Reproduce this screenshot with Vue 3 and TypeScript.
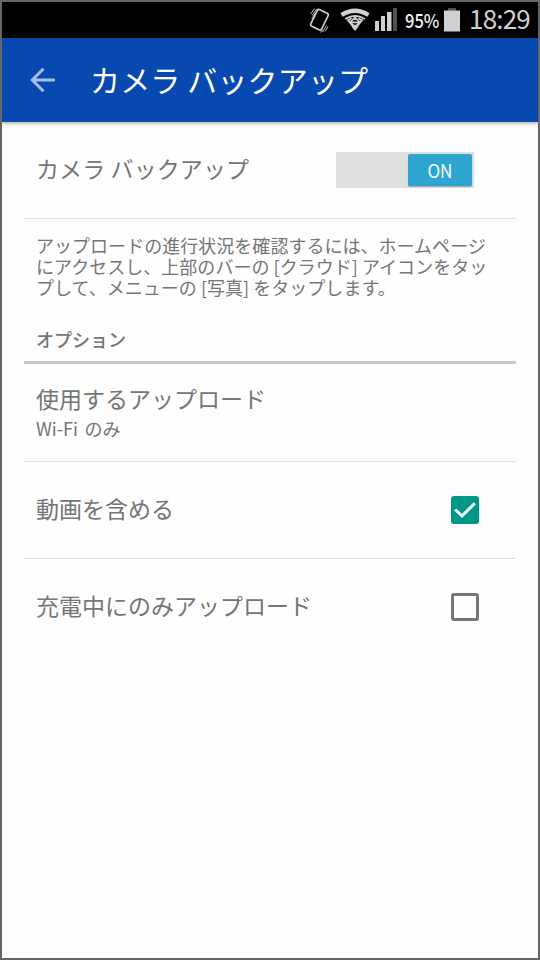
<script setup lang="ts">
import { ref } from 'vue'

const backupEnabled = ref(true)
const options = ref([
  { label: '動画を含める', checked: true },
  { label: '充電中にのみアップロード', checked: false },
])
const description = [
  'アップロードの進行状況を確認するには、ホームページ',
  'にアクセスし、上部のバーの [クラウド] アイコンをタッ',
  'プして、メニューの [写真] をタップします。',
].join('\n')
</script>

<template>
  <div class="screen">
    <header class="status">
      <svg class="vibrate" viewBox="0 0 24 28" width="24" height="28">
        <g fill="none" stroke="#d0d0d0">
          <rect x="6.500" y="4.500" width="12" height="18.500" rx="2" stroke-width="1.600" transform="rotate(26 12.500 13.700)" />
          <path d="M5.300 9.500 10 2.500M4.800 13 8 7.500M3.800 8 7.500 2.500M15.500 26l4-6.500M13.500 26.500l2-3M18 25.500l3-5" stroke-width="0.900" />
        </g>
      </svg>
      <svg class="wifi" viewBox="0 0 30 24" width="30" height="24">
        <g fill="none" stroke="#d0d0d0">
          <path d="M1.500 7Q15-1.500 28.500 7" stroke-width="4.200" />
          <path d="M5.200 11Q15 4.600 24.800 11" stroke-width="1.800" />
          <path d="M7.300 11.500 15 21l7.700-9.500M10 14.500l5-5 5 5-5 4.500zM15 7.500V12M8.500 12.500l3-2.500M21.500 12.500l-3-2.500M11 14.300h8" stroke-width="1.700" />
        </g>
        <path d="M11.500 18.500 15 16.500l3.500 2L15 23z" fill="#d0d0d0" />
      </svg>
      <svg class="signal" viewBox="0 0 22 24" width="22" height="24">
        <path d="M0 13h4v10H0zM6 8h4v15H6zM12 4h4.500v19H12z" fill="#d0d0d0" />
        <path d="M18 0h4v23h-4z" fill="#505050" />
      </svg>
      <span class="percent"><span class="digits">95%</span></span>
      <svg class="battery" viewBox="0 0 16 24" width="16" height="24">
        <path d="M4 0h8v3H4z" fill="#505050" />
        <path d="M0 2.500h16V23.500H0z" fill="#d0d0d0" />
      </svg>
      <span class="clock">18:29</span>
    </header>

    <div class="appbar">
      <svg class="back" viewBox="0 0 26 26" width="26" height="26">
        <path d="M26 13H3.500M14.500 1.800 3.300 13l11.200 11.200" fill="none" stroke="#a7c0ea" stroke-width="3" />
      </svg>
      <h1>カメラ バックアップ</h1>
    </div>

    <main>
      <section class="row master">
        <span class="label">カメラ バックアップ</span>
        <button class="switch" :class="{ on: backupEnabled }" @click="backupEnabled = !backupEnabled">
          <span class="thumb"><span class="state">{{ backupEnabled ? 'ON' : 'OFF' }}</span></span>
        </button>
      </section>
      <p class="description">{{ description }}</p>
      <h2>オプション</h2>
      <section class="row network">
        <span class="label">使用するアップロード</span>
        <span class="value">Wi-Fi のみ</span>
      </section>
      <section v-for="option in options" :key="option.label" class="row option" @click="option.checked = !option.checked">
        <span class="label">{{ option.label }}</span>
        <span class="checkbox" :class="{ checked: option.checked }">
          <svg v-if="option.checked" viewBox="0 0 28 28" width="28" height="28">
            <path d="m4.200 13.500 6.800 6.500L23.800 7.300" fill="none" stroke="#fff" stroke-width="3" />
          </svg>
        </span>
      </section>
    </main>
  </div>
</template>

<style>
body {
  margin: 0;
}
</style>

<style scoped>
.screen {
  box-sizing: border-box;
  width: 540px;
  height: 960px;
  border: 2px solid #666;
  background: #fefefe;
  color: #757575;
  font-family: "Noto Sans CJK JP", sans-serif;
  overflow: hidden;
}
.status {
  display: flex;
  align-items: center;
  height: 36px;
  padding-left: 305px;
  background: #000;
  color: #d0d0d0;
  white-space: nowrap;
}
.vibrate {
  margin-right: 9px;
}
.wifi {
  margin-bottom: 1px;
}
.signal {
  margin-left: 5px;
  margin-bottom: 1px;
}
.percent {
  width: 34px;
  margin-left: 8px;
  color: #f2f2f2;
  font: 500 19px/34px "Noto Sans CJK JP", sans-serif;
}
.digits {
  display: inline-block;
  transform: scaleX(0.87);
  transform-origin: left;
}
.battery {
  margin-left: 5px;
  margin-bottom: 1px;
}
.clock {
  margin: 0 0 4px 9px;
  font: 26px/32px "Noto Sans CJK JP", sans-serif;
  letter-spacing: -0.8px;
}
.appbar {
  display: flex;
  align-items: center;
  height: 84px;
  padding-left: 27px;
  background: #0849b0;
  box-shadow: 0 1px 4px rgba(0, 0, 0, 0.4);
}
h1 {
  margin: 0 0 3px 35px;
  color: #fff;
  font-size: 30px;
  font-weight: 400;
  line-height: 80px;
  letter-spacing: 0.15px;
}
main {
  padding: 0 22px;
}
.row {
  box-sizing: border-box;
  display: flex;
  border-bottom: 1px solid #e0e0e0;
  padding-left: 12px;
}
.label {
  margin-bottom: 4px;
  font-size: 23px;
  line-height: 32px;
}
.master {
  height: 97px;
  align-items: center;
  justify-content: space-between;
  padding-right: 42px;
}
.master .label {
  letter-spacing: 0.1px;
}
.switch {
  display: flex;
  box-sizing: border-box;
  width: 138px;
  height: 36px;
  padding: 2px;
  border: 0;
  background: #dfdfdf;
}
.switch.on {
  justify-content: flex-end;
}
.thumb {
  box-sizing: border-box;
  width: 64px;
  height: 32px;
  border-radius: 2px;
  background: #2ea5d1;
  box-shadow: 0 1px 1px rgba(0, 0, 0, 0.25);
  color: #f4fbff;
  font: 19px/32px "Noto Sans CJK JP", sans-serif;
  text-align: center;
}
.state {
  display: inline-block;
  transform: scaleX(0.9);
}
.description {
  margin: 0;
  padding: 16px 0 1px 12px;
  font-size: 18px;
  line-height: 21px;
  letter-spacing: 0.03px;
  white-space: pre;
}
h2 {
  box-sizing: border-box;
  height: 65px;
  margin: 0;
  padding: 25px 0 0 12px;
  border-bottom: 3px solid #c9c9c9;
  font-size: 18px;
  font-weight: 500;
  line-height: 30px;
}
.network {
  flex-direction: column;
  height: 98px;
  padding-top: 18px;
}
.network .label {
  margin-bottom: 0;
}
.value {
  font-size: 18px;
  line-height: 28px;
  word-spacing: 2.5px;
}
.option {
  height: 97px;
  align-items: center;
  justify-content: space-between;
  padding-right: 37px;
}
.option:last-child {
  border-bottom-color: transparent;
}
.checkbox {
  box-sizing: border-box;
  width: 28px;
  height: 28px;
  border: 3px solid #757575;
  border-radius: 3px;
}
.checkbox.checked {
  border: 0;
  background: #009688;
}
.checkbox svg {
  display: block;
}
</style>
